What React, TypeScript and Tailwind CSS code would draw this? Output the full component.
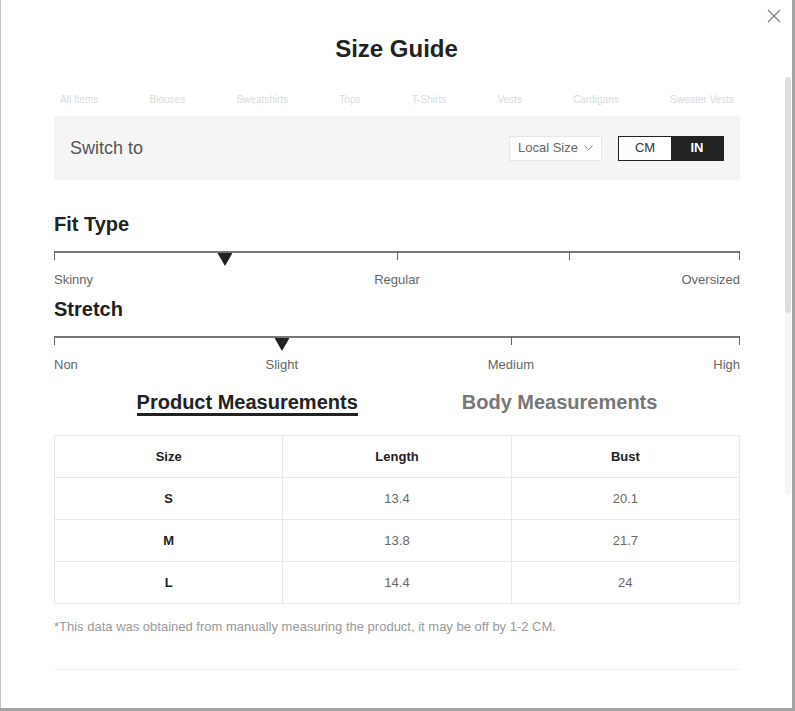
import React from 'react'

const font = { fontFamily: '"Liberation Sans", Arial, sans-serif' }

type Scale = {
  title: string
  ticks: number[]
  marker: number
  labels: { text: string; at: number }[]
}

const scales: Scale[] = [
  {
    title: 'Fit Type',
    ticks: [0, 50, 75, 100],
    marker: 24.9,
    labels: [
      { text: 'Skinny', at: 0 },
      { text: 'Regular', at: 50 },
      { text: 'Oversized', at: 100 },
    ],
  },
  {
    title: 'Stretch',
    ticks: [0, 66.6, 100],
    marker: 33.2,
    labels: [
      { text: 'Non', at: 0 },
      { text: 'Slight', at: 33.2 },
      { text: 'Medium', at: 66.6 },
      { text: 'High', at: 100 },
    ],
  },
]

const rows = [
  ['S', '13.4', '20.1'],
  ['M', '13.8', '21.7'],
  ['L', '14.4', '24'],
]

const fadedTabs = ['All Items', 'Blouses', 'Sweatshirts', 'Tops', 'T-Shirts', 'Vests', 'Cardigans', 'Sweater Vests']

function ScaleBlock({ scale, first }: { scale: Scale; first: boolean }) {
  return (
    <div className={first ? 'mt-[32px]' : 'mt-[9px]'}>
      <h3 className="text-[20px] font-bold leading-[24px] text-[#222]">{scale.title}</h3>

      {/* track */}
      <div className="relative mt-[15px] h-[21px]">
        <div className="h-[2px] w-full bg-[#777]" />
        {scale.ticks.map((t) => (
          <div
            key={t}
            className="absolute top-0 h-[9px] w-[1px] bg-[#666]"
            style={{ left: t === 100 ? 'calc(100% - 1px)' : `${t}%` }}
          />
        ))}
        <div
          className="absolute top-[2px] -translate-x-1/2"
          style={{ left: `${scale.marker}%` }}
        >
          <svg width="15" height="13" viewBox="0 0 15 13">
            <path d="M0 0 H15 L7.5 13 Z" fill="#222" />
          </svg>
        </div>
      </div>

      {/* labels */}
      <div className="relative h-[16px] text-[13px] leading-[16px] text-[#666]">
        {scale.labels.map((l) => {
          if (l.at === 0) return <span key={l.text} className="absolute left-0 top-0">{l.text}</span>
          if (l.at === 100) return <span key={l.text} className="absolute right-0 top-0">{l.text}</span>
          return (
            <span
              key={l.text}
              className="absolute top-0 -translate-x-1/2 whitespace-nowrap"
              style={{ left: `${l.at}%` }}
            >
              {l.text}
            </span>
          )
        })}
      </div>
    </div>
  )
}

export default function App() {
  return (
    <div className="flex h-[711px] w-[795px] overflow-hidden bg-[#a4a4a4]" style={font}>
      <div className="relative h-[708px] w-[792px] border-l border-[#c4c4c4] bg-white">
        {/* close */}
        <button className="absolute right-[11px] top-[9px] p-0 text-[#777]">
          <svg width="14" height="14" viewBox="0 0 14 14" fill="none" stroke="currentColor" strokeWidth="1.1">
            <path d="M1 1 L13 13 M13 1 L1 13" />
          </svg>
        </button>

        {/* scrollbar */}
        <div className="absolute right-[1px] top-[77px] h-[418px] w-[6px] rounded-full bg-[#f6f6f6]">
          <div className="h-[236px] w-full rounded-full bg-[#dedede]" />
        </div>

        <h2 className="pt-[35px] text-center text-[24px] font-bold leading-[28px] text-[#222]">Size Guide</h2>

        <div className="ml-[53px] w-[686px]">
          {/* category tabs, faded under the header */}
          <div className="mt-[32px] flex h-[10px] justify-between px-[6px] text-[10px] leading-[10px] text-[#dadada]">
            {fadedTabs.map((t) => (
              <span key={t} className="whitespace-nowrap">{t}</span>
            ))}
          </div>

          {/* switch bar */}
          <div className="mt-[11px] flex h-[64px] items-center justify-between bg-[#f5f5f5] px-[16px]">
            <span className="text-[18px] text-[#555]">Switch to</span>
            <div className="flex items-center gap-[16px]">
              <div className="flex h-[25px] w-[93px] items-center justify-center gap-[6px] border border-[#e6e6e6] bg-white text-[13px] text-[#666]">
                Local Size
                <svg width="9" height="6" viewBox="0 0 9 6" fill="none" stroke="#888" strokeWidth="1">
                  <path d="M0.5 0.5 L4.5 5 L8.5 0.5" />
                </svg>
              </div>
              <div className="flex h-[25px] w-[106px] border border-[#222] text-[13px]">
                <span className="flex flex-1 items-center justify-center bg-white text-[#333]">CM</span>
                <span className="flex flex-1 items-center justify-center bg-[#222] font-bold text-white">IN</span>
              </div>
            </div>
          </div>

          {scales.map((s, i) => (
            <ScaleBlock key={s.title} scale={s} first={i === 0} />
          ))}

          {/* measurement tabs */}
          <div className="mt-[18px] flex justify-center gap-[104px] text-[20px] font-bold leading-[22px]">
            <span className="border-b-[3px] border-[#222] text-[#222]">Product Measurements</span>
            <span className="text-[#777]">Body Measurements</span>
          </div>

          <table className="mt-[19px] w-full border-collapse border border-[#e8e8e8] text-center text-[13px]">
            <thead>
              <tr className="h-[42px]">
                {['Size', 'Length', 'Bust'].map((h) => (
                  <th key={h} className="w-1/3 border border-[#e8e8e8] font-bold text-[#222]">{h}</th>
                ))}
              </tr>
            </thead>
            <tbody>
              {rows.map((r) => (
                <tr key={r[0]} className="h-[42px]">
                  <td className="border border-[#e8e8e8] font-bold text-[#222]">{r[0]}</td>
                  <td className="border border-[#e8e8e8] text-[#666]">{r[1]}</td>
                  <td className="border border-[#e8e8e8] text-[#666]">{r[2]}</td>
                </tr>
              ))}
            </tbody>
          </table>

          <p className="mt-[15px] text-[13px] leading-[16px] text-[#999]">
            *This data was obtained from manually measuring the product, it may be off by 1-2 CM.
          </p>

          <div className="mt-[34px] border-t border-[#eeeeee]" />
        </div>
      </div>
    </div>
  )
}
